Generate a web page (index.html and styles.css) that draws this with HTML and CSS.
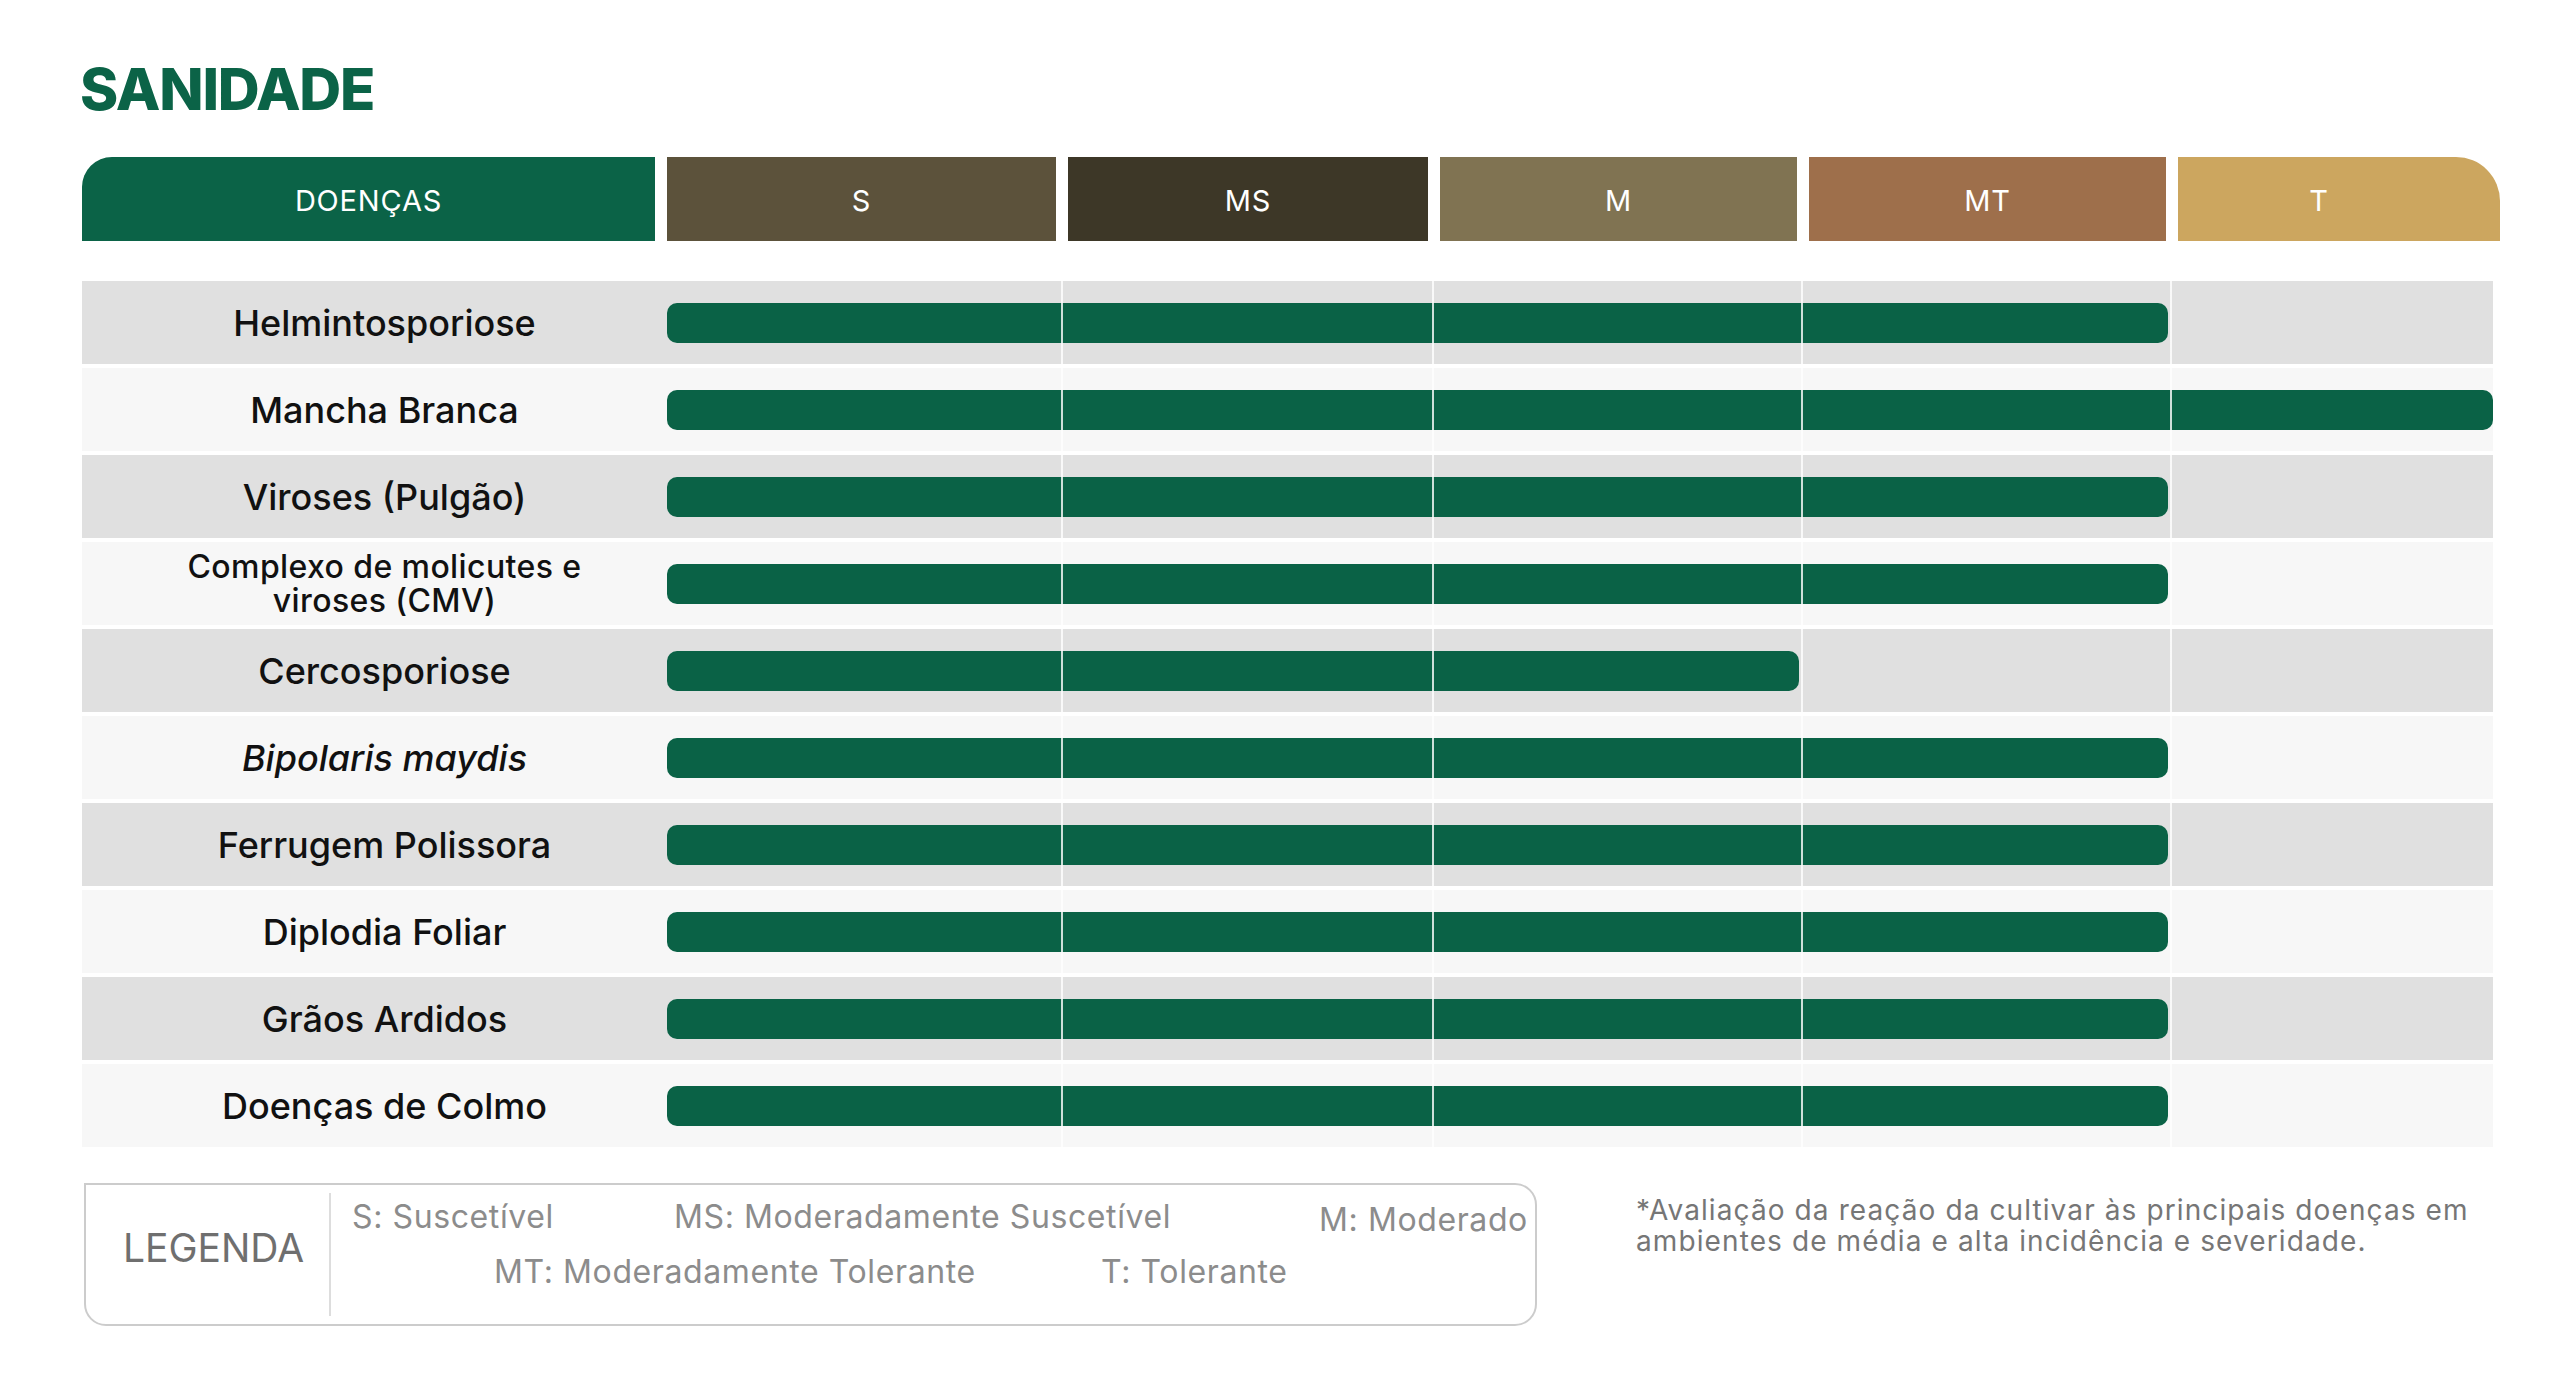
FILE: index.html
```html
<!DOCTYPE html>
<html lang="pt-BR">
<head>
<meta charset="utf-8">
<title>Sanidade</title>
<link rel="stylesheet" href="styles.css">
</head>
<body>
<main class="page">
  <h1 class="title">SANIDADE</h1>

  <div class="head">
    <div class="hcell h-doencas">DOENÇAS</div>
    <div class="hcell h-s">S</div>
    <div class="hcell h-ms">MS</div>
    <div class="hcell h-m">M</div>
    <div class="hcell h-mt">MT</div>
    <div class="hcell h-t">T</div>
  </div>

  <div class="rows">
    <div class="row dark"><div class="label">Helmintosporiose</div><div class="track"><div class="bar" style="width:82.2%"></div></div></div>
    <div class="row light"><div class="label">Mancha Branca</div><div class="track"><div class="bar" style="width:100%"></div></div></div>
    <div class="row dark"><div class="label">Viroses (Pulgão)</div><div class="track"><div class="bar" style="width:82.2%"></div></div></div>
    <div class="row light"><div class="label two-line">Complexo de molicutes e<br>viroses (CMV)</div><div class="track"><div class="bar" style="width:82.2%"></div></div></div>
    <div class="row dark"><div class="label">Cercosporiose</div><div class="track"><div class="bar" style="width:62%"></div></div></div>
    <div class="row light"><div class="label"><em>Bipolaris maydis</em></div><div class="track"><div class="bar" style="width:82.2%"></div></div></div>
    <div class="row dark"><div class="label">Ferrugem Polissora</div><div class="track"><div class="bar" style="width:82.2%"></div></div></div>
    <div class="row light"><div class="label">Diplodia Foliar</div><div class="track"><div class="bar" style="width:82.2%"></div></div></div>
    <div class="row dark"><div class="label">Grãos Ardidos</div><div class="track"><div class="bar" style="width:82.2%"></div></div></div>
    <div class="row light"><div class="label">Doenças de Colmo</div><div class="track"><div class="bar" style="width:82.2%"></div></div></div>
  </div>

  <div class="bottom">
    <div class="legend">
      <div class="legend-title">LEGENDA</div>
      <div class="legend-items">
        <div class="legend-line first">
          <span class="li li-s">S: Suscetível</span>
          <span class="li li-ms">MS: Moderadamente Suscetível</span>
          <span class="li li-m">M: Moderado</span>
        </div>
        <div class="legend-line second">
          <span class="li li-mt">MT: Moderadamente Tolerante</span>
          <span class="li li-t">T: Tolerante</span>
        </div>
      </div>
    </div>
    <p class="note">*Avaliação da reação da cultivar às principais doenças em<br>ambientes de média e alta incidência e severidade.</p>
  </div>
</main>
</body>
</html>
```

FILE: styles.css
```css
* { box-sizing: border-box; }

html, body {
  margin: 0;
  padding: 0;
  background: #ffffff;
}

body {
  font-family: "Inter", "Liberation Sans", sans-serif;
  color: #111111;
}

.page {
  width: 2560px;
  height: 1376px;
  padding: 60px 0 0 80px;
}

.title {
  margin: 0;
  font-size: 58px;
  line-height: 58px;
  font-weight: 800;
  color: #0b6347;
  letter-spacing: -1.2px;
}

/* ---------- header ---------- */
.head {
  margin-top: 39px;
  margin-left: 2px;
  display: flex;
  gap: 12px;
  height: 84px;
  width: 2418px;
}

.hcell {
  display: flex;
  align-items: center;
  justify-content: center;
  padding-top: 2px;
  color: #ffffff;
  font-size: 29px;
  font-weight: 400;
  letter-spacing: 0.8px;
}

.h-doencas { width: 573px; background: #0b6347; border-top-left-radius: 30px; }
.h-s  { width: 389px; background: #5c523b; }
.h-ms { width: 360px; background: #3d3727; }
.h-m  { width: 357px; background: #807352; }
.h-mt { width: 357px; background: #9e6f4b; }
.h-t  { width: 322px; background: #cca65f; border-top-right-radius: 44px; padding-right: 40px; }

/* ---------- rows ---------- */
.rows {
  margin-top: 40px;
  margin-left: 2px;
  display: flex;
  flex-direction: column;
  gap: 4px;
  width: 2411px;
}

.row {
  display: flex;
  height: 83px;
}

.row.dark  { background: #e0e0e0; }
.row.light { background: #f7f7f7; }

.label {
  width: 585px;
  padding-left: 20px;
  display: flex;
  align-items: center;
  justify-content: center;
  text-align: center;
  font-size: 36px;
  font-weight: 500;
  color: #111111;
}

.label em { font-style: italic; }

.label.two-line {
  font-size: 32px;
  line-height: 34px;
  letter-spacing: 0.4px;
}

.track {
  position: relative;
  flex: 1;
  display: flex;
  align-items: center;
}

.bar {
  height: 40px;
  background: #0a6246;
  border-radius: 10px;
}

.track::after {
  content: "";
  position: absolute;
  inset: 0;
  pointer-events: none;
  background-image:
    linear-gradient(rgba(255,255,255,0.8), rgba(255,255,255,0.8)),
    linear-gradient(rgba(255,255,255,0.8), rgba(255,255,255,0.8)),
    linear-gradient(rgba(255,255,255,0.8), rgba(255,255,255,0.8)),
    linear-gradient(rgba(255,255,255,0.8), rgba(255,255,255,0.8));
  background-size: 2px 100%;
  background-repeat: no-repeat;
  background-position: 394px 0, 765px 0, 1134px 0, 1503px 0;
}

/* ---------- bottom ---------- */
.bottom {
  margin-top: 36px;
  display: flex;
  align-items: flex-start;
}

.legend {
  margin-left: 4px;
  width: 1453px;
  height: 143px;
  border: 2px solid #cccccc;
  border-radius: 0 22px 22px 22px;
  display: flex;
  align-items: stretch;
  padding: 8px 0;
}

.legend-title {
  width: 245px;
  border-right: 2px solid #dddddd;
  display: flex;
  align-items: center;
  justify-content: center;
  padding: 0 0 14px 12px;
  font-size: 39px;
  font-weight: 400;
  color: #6f6f6f;
}

.legend-items {
  flex: 1;
  padding: 4px 0 0 21px;
  font-size: 32px;
  line-height: 40px;
  letter-spacing: 0.6px;
  color: #8c8c8c;
}

.legend-line {
  display: flex;
}

.legend-line.second {
  margin-top: 15px;
  padding-left: 142px;
}

.li-s  { width: 322px; }
.li-ms { width: 645px; }
.li-m  { position: relative; top: 3px; }
.li-mt { width: 607px; }

.note {
  margin: 12px 0 0 99px;
  font-size: 28px;
  line-height: 31px;
  letter-spacing: 1.1px;
  color: #767676;
}
```
